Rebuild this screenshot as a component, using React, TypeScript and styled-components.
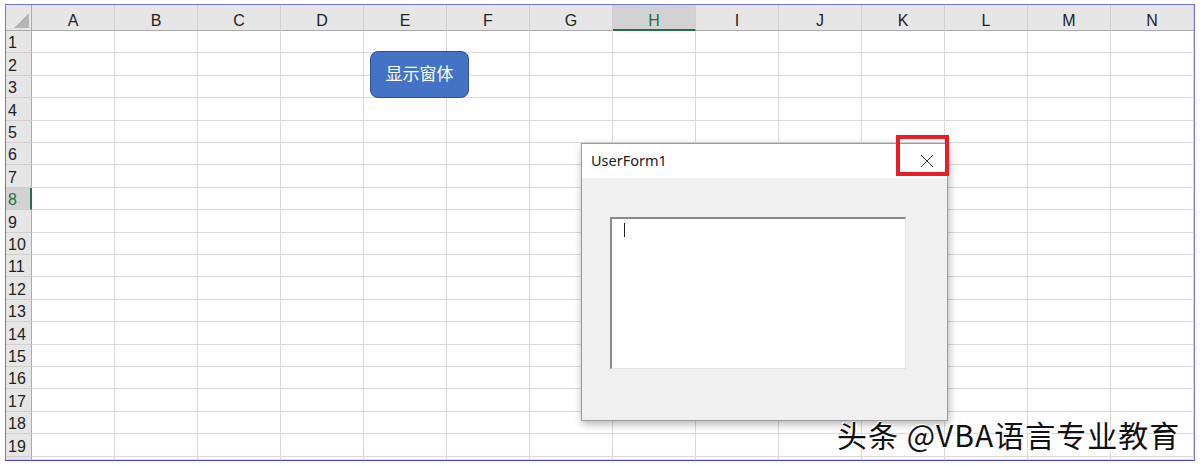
import * as React from "react";
import styled, { createGlobalStyle } from "styled-components";

const GlobalStyle = createGlobalStyle`
  html, body {
    margin: 0;
    padding: 0;
    background: #ffffff;
  }
  body {
    font-family: "Liberation Sans", Arial, sans-serif;
  }
`;

const COLS = ["A", "B", "C", "D", "E", "F", "G", "H", "I", "J", "K", "L", "M", "N"];
const ROW_COUNT = 20;
const VISIBLE_ROWS = 19;
const ROW_H = 22.4;

// row lines land on whole pixels, like the screenshot
const rowHeights: string[] = [];
for (let i = 1; i < ROW_COUNT; i++) {
  rowHeights.push(Math.round(i * ROW_H) - Math.round((i - 1) * ROW_H) + "px");
}

const Frame = styled.div`
  position: relative;
  box-sizing: border-box;
  margin: 4px 0 0 5px;
  width: 1190px;
  height: 457px;
  border: 1px solid #7474ea;
  border-bottom-color: #4646e4;
  overflow: hidden;
  background: #ffffff;
`;

const Sheet = styled.div<{ $rows: string }>`
  display: grid;
  grid-template-columns: 26px repeat(14, 83px);
  grid-template-rows: 26px ${(p) => p.$rows} 1fr;
  height: 100%;
`;

const Corner = styled.div`
  position: relative;
  box-sizing: border-box;
  background: #e6e6e6;
  border-right: 1px solid #ababab;
  border-bottom: 1px solid #ababab;

  &::after {
    content: "";
    position: absolute;
    right: 2px;
    bottom: 2px;
    width: 15px;
    height: 15px;
    background: #b5b5b5;
    clip-path: polygon(100% 0, 100% 100%, 0 100%);
  }
`;

const ColHeader = styled.div<{ $active?: boolean }>`
  box-sizing: border-box;
  display: flex;
  align-items: flex-end;
  justify-content: center;
  background: ${(p) => (p.$active ? "#d2d2d2" : "#e6e6e6")};
  border-right: 1px solid #d0d0d0;
  border-bottom: ${(p) => (p.$active ? "2px solid #217346" : "1px solid #ababab")};
  color: ${(p) => (p.$active ? "#217346" : "#222222")};
  font-size: 16px;
  line-height: 16px;
  padding-bottom: ${(p) => (p.$active ? "0" : "1px")};
`;

const RowHeader = styled.div<{ $active?: boolean }>`
  box-sizing: border-box;
  display: flex;
  align-items: flex-end;
  justify-content: flex-start;
  padding-left: 2px;
  padding-bottom: 1px;
  background: ${(p) => (p.$active ? "#d2d2d2" : "#e6e6e6")};
  border-right: ${(p) => (p.$active ? "2px solid #217346" : "1px solid #ababab")};
  border-bottom: 1px solid #d0d0d0;
  color: ${(p) => (p.$active ? "#217346" : "#222222")};
  font-size: 16px;
  line-height: 16px;
  overflow: hidden;
`;

const Cell = styled.div`
  box-sizing: border-box;
  border-right: 1px solid #dadada;
  border-bottom: 1px solid #dadada;
`;

const ShowButton = styled.button`
  position: absolute;
  left: 364px;
  top: 46px;
  width: 99px;
  height: 47px;
  box-sizing: border-box;
  display: flex;
  align-items: center;
  justify-content: center;
  padding: 0 0 5px;
  background: #4472c4;
  border: 1px solid #2f528f;
  border-radius: 8px;
  color: #ffffff;
  font-family: "Noto Sans CJK SC", sans-serif;
  font-size: 17px;
  cursor: pointer;
`;

const Dialog = styled.div`
  position: absolute;
  left: 575px;
  top: 138px;
  width: 367px;
  height: 278px;
  box-sizing: border-box;
  display: flex;
  flex-direction: column;
  border: 1px solid #9b9b9b;
  background: #f0f0f0;
  box-shadow: 1px 3px 8px rgba(0, 0, 0, 0.3);
`;

const TitleBar = styled.div`
  height: 34px;
  flex: none;
  display: flex;
  align-items: center;
  justify-content: space-between;
  background: #ffffff;
  padding-left: 9px;
`;

const Title = styled.span`
  font-family: "Noto Sans", "Open Sans", sans-serif;
  font-size: 14.5px;
  color: #1a1a1a;
  padding-bottom: 2px;
`;

const CloseButton = styled.div`
  width: 40px;
  height: 100%;
  display: flex;
  align-items: center;
  justify-content: center;
`;

const FormBody = styled.div`
  flex: 1;
  padding: 39px 0 0 28px;
`;

const TextBox = styled.div`
  position: relative;
  width: 296px;
  height: 152px;
  box-sizing: border-box;
  background: #ffffff;
  border-style: solid;
  border-width: 2px 1px 1px 2px;
  border-color: #8a8a8a #e3e3e3 #e3e3e3 #8a8a8a;
`;

const Caret = styled.span`
  position: absolute;
  left: 12px;
  top: 4px;
  width: 1px;
  height: 14px;
  background: #222222;
`;

const Highlight = styled.div`
  position: absolute;
  left: 890px;
  top: 130px;
  width: 53px;
  height: 41px;
  box-sizing: border-box;
  border: 4px solid #ee1c25;
  pointer-events: none;
`;

const Watermark = styled.div`
  position: absolute;
  left: 831px;
  top: 411px;
  white-space: nowrap;
  font-family: "Noto Sans CJK SC", sans-serif;
  font-size: 30px;
  line-height: 36px;
  letter-spacing: 1px;
  color: #111111;
  text-shadow: 1px 1px 1px #ffffff, -1px -1px 0 #ffffff, 2px 2px 2px rgba(255, 255, 255, 0.9);
`;

function CloseIcon() {
  return (
    <svg width="14" height="14" viewBox="0 0 14 14">
      <path d="M1 1 L13 13 M13 1 L1 13" stroke="#333333" strokeWidth="1" fill="none" />
    </svg>
  );
}

export default function App(): React.ReactElement {
  return (
    <>
      <GlobalStyle />
      <Frame>
        <Sheet $rows={rowHeights.join(" ")}>
          <Corner />
          {COLS.map((c) => (
            <ColHeader key={c} $active={c === "H"}>
              {c}
            </ColHeader>
          ))}
          {Array.from({ length: ROW_COUNT }, (_, r) => (
            <React.Fragment key={r}>
              <RowHeader $active={r + 1 === 8}>
                {r < VISIBLE_ROWS ? r + 1 : null}
              </RowHeader>
              {COLS.map((c) => (
                <Cell key={c} />
              ))}
            </React.Fragment>
          ))}
        </Sheet>

        <ShowButton>显示窗体</ShowButton>

        <Dialog>
          <TitleBar>
            <Title>UserForm1</Title>
            <CloseButton>
              <CloseIcon />
            </CloseButton>
          </TitleBar>
          <FormBody>
            <TextBox>
              <Caret />
            </TextBox>
          </FormBody>
        </Dialog>

        <Highlight />
        <Watermark>头条 @VBA语言专业教育</Watermark>
      </Frame>
    </>
  );
}
